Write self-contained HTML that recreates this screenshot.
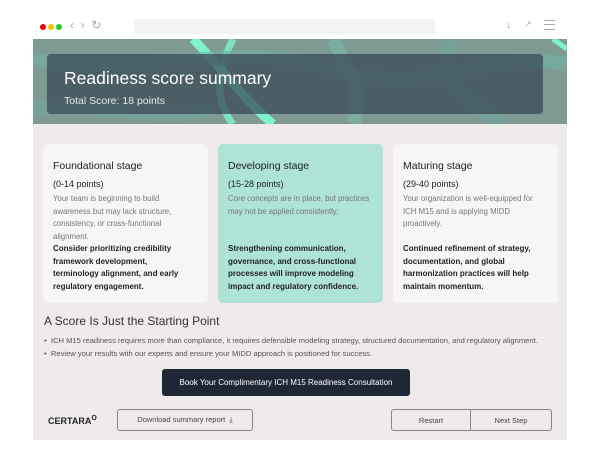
<!DOCTYPE html>
<html><head><style>
*{margin:0;padding:0;box-sizing:border-box}
body{width:600px;height:463px;background:#fff;font-family:"Liberation Sans",sans-serif;position:relative;overflow:hidden}
.abs{position:absolute}
.dot{position:absolute;top:24px;width:6px;height:6px;border-radius:50%}
.frame{left:33px;top:39px;width:534px;height:401px;background:#efebea}
.card{position:absolute;top:105px;width:165px;height:159px;border-radius:5px;background:#f8f6f5;padding:11px 10px}
.card h3{font-weight:normal;font-size:10.5px;color:#222;margin-top:5px}
.card .pts{font-size:9px;color:#222;margin-top:7px}
.card .d{font-size:7.8px;color:#777;line-height:12.5px;margin-top:4px;height:60px;padding-right:6px}
.card .b{font-size:8px;font-weight:bold;color:#222;line-height:12.5px;position:absolute;top:99px;left:10px;right:16px}
.btn{position:absolute;border:1px solid #888;border-radius:3px;font-size:7.5px;color:#444;display:flex;align-items:center;justify-content:center}
</style></head><body>
<div class="dot" style="left:40px;background:#e00"></div>
<div class="dot" style="left:48px;background:#f0c000"></div>
<div class="dot" style="left:56px;background:#2c2"></div>
<div class="abs" style="left:70px;top:18px;font-size:12px;color:#aaa">&#8249;&nbsp;&nbsp;&#8250;&nbsp;&nbsp;&#8635;</div>
<div class="abs" style="left:134px;top:19px;width:301px;height:15px;background:#f1f2f2"></div>
<div class="abs" style="left:506px;top:19px;font-size:11px;color:#aaa">&#8595;</div>
<div class="abs" style="left:524px;top:19px;font-size:9px;color:#aaa">&#8599;</div>
<div class="abs" style="left:544px;top:20px;width:11px;height:10px;border-top:1.5px solid #aaa;border-bottom:1.5px solid #aaa"><div style="margin-top:3px;border-top:1.5px solid #aaa"></div></div>
<div class="abs frame">
<svg class="abs" style="left:0;top:0" width="534" height="85">
<rect width="534" height="85" fill="#7f9a92"/>
<path d="M160 0 C190 30 210 60 240 85" stroke="#7ef2cc" stroke-width="9" fill="none"/>
<path d="M200 0 C185 30 180 60 200 85" stroke="#7ef2cc" stroke-width="7" fill="none" opacity=".8"/>
<path d="M0 20 C100 40 200 0 300 30 S450 10 534 25" stroke="#6fb3a7" stroke-width="14" fill="none" opacity=".6"/>
<path d="M300 0 C320 40 330 60 320 85" stroke="#79b2a8" stroke-width="14" fill="none" opacity=".7"/>
<path d="M420 0 C400 30 430 60 470 85" stroke="#6ea7a0" stroke-width="16" fill="none" opacity=".6"/>
<path d="M0 70 C60 60 120 85 180 70" stroke="#6fa9a0" stroke-width="14" fill="none" opacity=".6"/>
<path d="M520 0 L534 10" stroke="#7ef2cc" stroke-width="5"/>
</svg>
<div class="abs" style="left:14px;top:15px;width:496px;height:60px;background:rgba(55,70,85,.72);border-radius:4px"></div>
<div class="abs" style="left:31px;top:29px;font-size:17.5px;color:#fff">Readiness score summary</div>
<div class="abs" style="left:31px;top:56px;font-size:10.5px;color:#e8e8e8">Total Score: 18 points</div>
<div class="card" style="left:10px"><h3>Foundational stage</h3><div class="pts">(0-14 points)</div><div class="d">Your team is beginning to build awareness but may lack structure, consistency, or cross-functional alignment.</div><div class="b">Consider prioritizing credibility framework development, terminology alignment, and early regulatory engagement.</div></div>
<div class="card" style="left:185px;background:#aee3d5"><h3>Developing stage</h3><div class="pts">(15-28 points)</div><div class="d" style="padding-right:0">Core concepts are in place, but practices may not be applied consistently.</div><div class="b">Strengthening communication, governance, and cross-functional processes will improve modeling impact and regulatory confidence.</div></div>
<div class="card" style="left:360px"><h3>Maturing stage</h3><div class="pts">(29-40 points)</div><div class="d">Your organization is well-equipped for ICH M15 and is applying MIDD proactively.</div><div class="b">Continued refinement of strategy, documentation, and global harmonization practices will help maintain momentum.</div></div>
<div class="abs" style="left:11px;top:275px;font-size:12px;color:#333">A Score Is Just the Starting Point</div>
<div class="abs" style="left:11px;top:295px;font-size:7.6px;color:#555;line-height:13px;white-space:nowrap">&#8226;&nbsp; ICH M15 readiness requires more than compliance, it requires defensible modeling strategy, structured documentation, and regulatory alignment.<br>&#8226;&nbsp; Review your results with our experts and ensure your MIDD approach is positioned for success.</div>
<div class="abs" style="left:129px;top:330px;width:248px;height:27px;background:#1f2634;border-radius:3px;color:#fff;font-size:8px;display:flex;align-items:center;justify-content:center">Book Your Complimentary ICH M15 Readiness Consultation</div>
<div class="abs" style="left:15px;top:376px;font-size:9px;font-weight:bold;color:#222">CERTARA<sup style="font-size:7px">O</sup></div>
<div class="btn" style="left:84px;top:370px;width:136px;height:22px">Download summary report &nbsp;&#10515;</div>
<div class="btn" style="left:358px;top:370px;width:80px;height:22px;border-radius:3px 0 0 3px">Restart</div>
<div class="btn" style="left:437px;top:370px;width:82px;height:22px;border-radius:0 3px 3px 0">Next Step</div>
</div>
</body></html>
